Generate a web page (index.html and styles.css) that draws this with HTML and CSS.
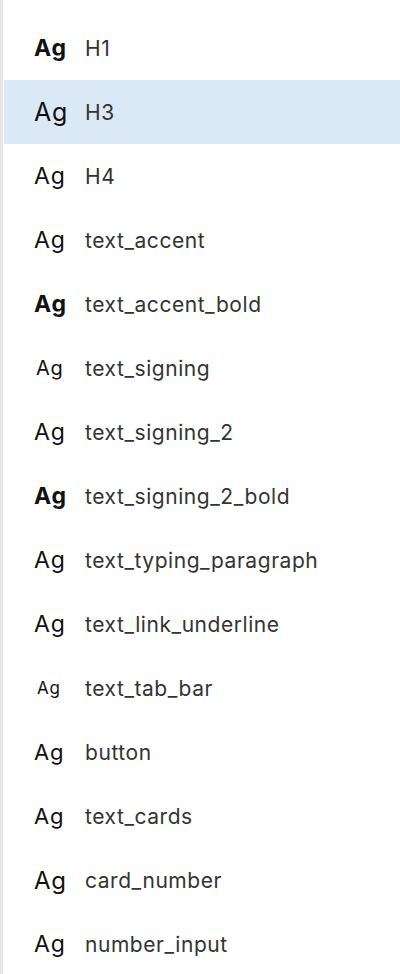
FILE: index.html
```html
<!DOCTYPE html>
<html lang="en">
<head>
    <meta charset="UTF-8">
    <meta name="viewport" content="width=device-width, initial-scale=1.0">
    <title>Text styles</title>
    <link rel="stylesheet" href="styles.css">
</head>
<body>
    <div class="panel">
        <ul class="style-list">
            <li class="style-row"><span class="sample bold s22">Ag</span><span class="style-name">H1</span></li>
            <li class="style-row selected"><span class="sample s24">Ag</span><span class="style-name">H3</span></li>
            <li class="style-row"><span class="sample s22">Ag</span><span class="style-name">H4</span></li>
            <li class="style-row"><span class="sample s22">Ag</span><span class="style-name">text_accent</span></li>
            <li class="style-row"><span class="sample bold s22">Ag</span><span class="style-name">text_accent_bold</span></li>
            <li class="style-row"><span class="sample s19">Ag</span><span class="style-name">text_signing</span></li>
            <li class="style-row"><span class="sample s22">Ag</span><span class="style-name">text_signing_2</span></li>
            <li class="style-row"><span class="sample bold s22">Ag</span><span class="style-name">text_signing_2_bold</span></li>
            <li class="style-row"><span class="sample s22">Ag</span><span class="style-name">text_typing_paragraph</span></li>
            <li class="style-row"><span class="sample s22">Ag</span><span class="style-name">text_link_underline</span></li>
            <li class="style-row"><span class="sample s16">Ag</span><span class="style-name">text_tab_bar</span></li>
            <li class="style-row"><span class="sample s21">Ag</span><span class="style-name">button</span></li>
            <li class="style-row"><span class="sample s21">Ag</span><span class="style-name">text_cards</span></li>
            <li class="style-row"><span class="sample s23">Ag</span><span class="style-name">card_number</span></li>
            <li class="style-row"><span class="sample s22">Ag</span><span class="style-name">number_input</span></li>
        </ul>
    </div>
</body>
</html>
```

FILE: styles.css
```css
body {
    margin: 0;
    background: #fff;
    font-family: Inter, "Liberation Sans", sans-serif;
}

.panel {
    height: 974px;
    border-left: 3px solid #e6e6e6;
    padding-left: 1px;
    overflow: hidden;
}

.style-list {
    list-style: none;
    margin: 0;
    padding: 16px 0 0;
}

.style-row {
    display: flex;
    align-items: center;
    height: 64px;
    padding-left: 30px;
}

.style-row.selected {
    background: #dbe9f6;
}

.sample {
    width: 51px;
    color: #111;
    font-weight: 400;
    letter-spacing: 0.8px;
}

.sample.bold {
    font-weight: 700;
}

.s16 { font-size: 17px; padding-left: 3px; width: 48px; }
.s19 { font-size: 20px; padding-left: 2px; width: 49px; }
.s21 { font-size: 22px; }
.s22 { font-size: 23px; }
.s23 { font-size: 24px; }
.s24 { font-size: 25px; }

.style-name {
    font-size: 21px;
    letter-spacing: 0.55px;
    color: #333;
}
```
